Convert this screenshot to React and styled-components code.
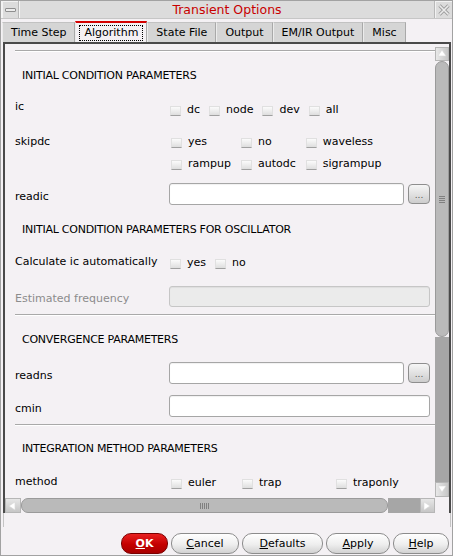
import styled, { createGlobalStyle } from "styled-components";

const GlobalStyle = createGlobalStyle`
  html, body { margin: 0; padding: 0; background: #f4f1f4; }
  * { box-sizing: border-box; }
`;

const Window = styled.div`
  width: 453px;
  height: 556px;
  border: 1px solid #a2a2a2;
  background: #f4f1f4;
  display: flex;
  flex-direction: column;
  font-family: "DejaVu Sans", "Noto Sans", sans-serif;
  font-size: 11px;
  color: #000;
  overflow: hidden;
`;

const TitleBar = styled.div`
  height: 18px;
  display: flex;
  background: #dcdcdc;
  border-bottom: 1px solid #c6c6c6;
`;

const TitleButton = styled.div`
  width: 18px;
  display: flex;
  align-items: center;
  justify-content: center;
  border-left: ${(p) => (p.$side === "right" ? "1px solid #b8b8b8" : "1px solid #f4f4f4")};
  border-right: ${(p) => (p.$side === "left" ? "1px solid #b8b8b8" : "none")};
  box-shadow: inset 1px 1px 0 #f2f2f2;
`;

const MinBar = styled.div`
  width: 11px;
  height: 4px;
  border: 1px solid #8e8e8e;
  border-radius: 1px;
  background: #ececec;
`;

const Title = styled.div`
  flex: 1;
  text-align: center;
  line-height: 18px;
  font-size: 12.5px;
  color: #c80000;
  border-left: 1px solid #f4f4f4;
`;

const TabBar = styled.div`
  margin-top: 2px;
  height: 21px;
  padding-left: 1px;
  display: flex;
  align-items: flex-end;
`;

const Tab = styled.div`
  height: ${(p) => (p.$active ? "21px" : "20px")};
  padding: 2px 3px 0;
  background: ${(p) => (p.$active ? "#f4f1f4" : "#d5d5d5")};
  border-top: ${(p) => (p.$active ? "2px solid #d40000" : "1px solid #c2c2c2")};
  border-right: 1px solid #a9a9a9;
  border-left: 1px solid #ececec;
`;

const TabLabel = styled.span`
  display: block;
  line-height: 14px;
  padding: 0 4px;
  border: 1px dotted ${(p) => (p.$focus ? "#000" : "transparent")};
`;

const Panel = styled.div`
  margin: 0 1px 0 2px;
  border: 2px solid #4a4a4a;
  border-bottom: none;
  display: grid;
  grid-template-columns: 1fr 14px;
  grid-template-rows: 453px 16px;
  background: #f4f1f4;
`;

const PanelFoot = styled.div`
  margin: 0 1px 0 2px;
  height: 14px;
  border-left: 1px solid #c4c4c4;
  border-right: 1px solid #c4c4c4;
`;

const Viewport = styled.div`
  overflow: hidden;
  padding-top: 6px;
`;

const Separator = styled.div`
  margin: ${(p) => p.$top || 0}px 0 0 10px;
  height: 2px;
  border-top: 1px solid #a9a9a9;
  border-bottom: 1px solid #ffffff;
`;

const SectionTitle = styled.div`
  margin-top: ${(p) => p.$top}px;
  padding-left: 17px;
  line-height: 16px;
  letter-spacing: -0.25px;
`;

const FormRow = styled.div`
  margin-top: ${(p) => p.$top}px;
  padding: 0 5px 0 10px;
  display: grid;
  grid-template-columns: 154px 1fr;
  align-items: ${(p) => (p.$field ? "end" : "start")};
`;

const Label = styled.div`
  line-height: 16px;
  white-space: nowrap;
  color: ${(p) => (p.$muted ? "#8c8c8c" : "#000")};
`;

const Options = styled.div`
  padding: ${(p) => p.$pad || 0}px 0 0 ${(p) => p.$indent || 1}px;
  display: ${(p) => (p.$columns ? "grid" : "flex")};
  grid-template-columns: ${(p) => p.$columns || "none"};
  justify-content: start;
  column-gap: ${(p) => (p.$columns ? 10 : 9)}px;
  row-gap: 6px;
`;

const Check = styled.label`
  display: inline-flex;
  align-items: center;
  gap: 6px;
  line-height: 16px;
  white-space: nowrap;
`;

const Box = styled.span`
  width: 11px;
  height: 10px;
  margin-top: 2px;
  border: 1px solid #e0e0e0;
  border-bottom-color: #a0a0a0;
  background: linear-gradient(#fbfbfb, #dedede);
`;

const Field = styled.div`
  display: flex;
  gap: 4px;
  align-items: center;
`;

const Input = styled.div`
  flex: 1;
  height: ${(p) => p.$h || 22}px;
  border: 1px solid ${(p) => (p.$disabled ? "#c6c6c6" : "#a6a6a6")};
  border-radius: 3px;
  background: ${(p) => (p.$disabled ? "#ebebeb" : "#ffffff")};
  box-shadow: inset 0 1px 1px rgba(0, 0, 0, 0.06);
`;

const Browse = styled.div`
  width: 22px;
  height: 20px;
  border: 1px solid #8e8e8e;
  border-radius: 4px;
  background: linear-gradient(#f6f6f6, #cdcdcd);
  font-size: 9px;
  color: #555;
  text-align: center;
  line-height: 20px;
`;

const VScroll = styled.div`
  padding-top: 3px;
  display: flex;
  flex-direction: column;
`;

const ArrowBtn = styled.div`
  flex: none;
  width: ${(p) => p.$w || 14}px;
  height: ${(p) => p.$h || 14}px;
  display: flex;
  align-items: center;
  justify-content: center;
  border: 1px solid #b6b6b6;
  background: linear-gradient(${(p) => (p.$horiz ? "#e6e6e6, #c6c6c6" : "90deg, #e8e8e8, #c6c6c6")});
`;

const Thumb = styled.div`
  flex: none;
  width: ${(p) => p.$w}px;
  height: ${(p) => p.$h}px;
  border: 1px solid #9a9a9a;
  border-radius: 7px;
  background: #bababa;
  display: flex;
  align-items: center;
  justify-content: center;
`;

const Grip = styled.div`
  width: ${(p) => (p.$horiz ? 9 : 6)}px;
  height: ${(p) => (p.$horiz ? 6 : 7)}px;
  background: repeating-linear-gradient(
    ${(p) => (p.$horiz ? "to right" : "to bottom")},
    #808080 0 1px,
    transparent 1px 2px
  );
`;

const Track = styled.div`
  flex: 1;
  background: #a6a6a6;
`;

const HScroll = styled.div`
  display: flex;
  padding-top: 1px;
`;

const ButtonRow = styled.div`
  flex: 1;
  display: flex;
  justify-content: flex-end;
  align-items: flex-end;
  gap: 3px;
  padding: 0 3px 1px 0;
`;

const PushButton = styled.button`
  width: ${(p) => p.$width}px;
  height: 21px;
  padding: 0;
  border-radius: 10px;
  font-family: "DejaVu Sans", "Noto Sans", sans-serif;
  font-size: 11px;
  border: 1px solid ${(p) => (p.$primary ? "#7a0000" : "#8c8c8c")};
  color: ${(p) => (p.$primary ? "#fff" : "#000")};
  font-weight: ${(p) => (p.$primary ? "bold" : "normal")};
  background: ${(p) =>
    p.$primary
      ? "linear-gradient(#e82020, #c40000 55%, #a80000)"
      : "linear-gradient(#ffffff, #eeeeee 55%, #d2d2d2)"};
`;

const Tri = ({ dir }) => {
  const pts = {
    up: "1,7 5,1 9,7",
    down: "1,1 5,7 9,1",
    left: "7,1 1,5 7,9",
    right: "1,1 7,5 1,9",
  }[dir];
  return (
    <svg width="10" height="10" viewBox="0 0 10 10">
      <polygon points={pts} fill="#ffffff" stroke="#d8d8d8" strokeWidth="0.6" />
    </svg>
  );
};

const CheckItem = ({ children }) => (
  <Check>
    <Box />
    {children}
  </Check>
);

const tabs = ["Time Step", "Algorithm", "State File", "Output", "EM/IR Output", "Misc"];

const buttons = [
  { k: "O", rest: "K", w: 47, primary: true },
  { k: "C", rest: "ancel", w: 68 },
  { k: "D", rest: "efaults", w: 81 },
  { k: "A", rest: "pply", w: 64 },
  { k: "H", rest: "elp", w: 56 },
];

export default function App() {
  return (
    <>
      <GlobalStyle />
      <Window>
        <TitleBar>
          <TitleButton $side="left">
            <MinBar />
          </TitleButton>
          <Title>Transient Options</Title>
          <TitleButton $side="right">
            <svg width="12" height="12" viewBox="0 0 12 12">
              <path d="M1.5 1.5 L10.5 10.5 M10.5 1.5 L1.5 10.5" stroke="#9c9c9c" strokeWidth="3.2" />
              <path d="M1.5 1.5 L10.5 10.5 M10.5 1.5 L1.5 10.5" stroke="#ececec" strokeWidth="1.6" />
            </svg>
          </TitleButton>
        </TitleBar>

        <TabBar>
          {tabs.map((t) => (
            <Tab key={t} $active={t === "Algorithm"}>
              <TabLabel $focus={t === "Algorithm"}>{t}</TabLabel>
            </Tab>
          ))}
        </TabBar>

        <Panel>
          <Viewport>
            <Separator />
            <SectionTitle $top={16}>INITIAL CONDITION PARAMETERS</SectionTitle>

            <FormRow $top={15}>
              <Label>ic</Label>
              <Options $pad={3}>
                <CheckItem>dc</CheckItem>
                <CheckItem>node</CheckItem>
                <CheckItem>dev</CheckItem>
                <CheckItem>all</CheckItem>
              </Options>
            </FormRow>

            <FormRow $top={16}>
              <Label>skipdc</Label>
              <Options $columns="auto auto auto" $indent={2}>
                <CheckItem>yes</CheckItem>
                <CheckItem>no</CheckItem>
                <CheckItem>waveless</CheckItem>
                <CheckItem>rampup</CheckItem>
                <CheckItem>autodc</CheckItem>
                <CheckItem>sigrampup</CheckItem>
              </Options>
            </FormRow>

            <FormRow $top={11} $field>
              <Label>readic</Label>
              <Field>
                <Input />
                <Browse>...</Browse>
              </Field>
            </FormRow>

            <SectionTitle $top={17}>INITIAL CONDITION PARAMETERS FOR OSCILLATOR</SectionTitle>

            <FormRow $top={16}>
              <Label>Calculate ic automatically</Label>
              <Options $pad={1}>
                <CheckItem>yes</CheckItem>
                <CheckItem>no</CheckItem>
              </Options>
            </FormRow>

            <FormRow $top={15} $field>
              <Label $muted>Estimated frequency</Label>
              <Field>
                <Input $disabled $h={21} />
              </Field>
            </FormRow>

            <Separator $top={7} />
            <SectionTitle $top={16}>CONVERGENCE PARAMETERS</SectionTitle>

            <FormRow $top={14} $field>
              <Label>readns</Label>
              <Field>
                <Input />
                <Browse>...</Browse>
              </Field>
            </FormRow>

            <FormRow $top={11} $field>
              <Label>cmin</Label>
              <Field>
                <Input />
              </Field>
            </FormRow>

            <Separator $top={7} />
            <SectionTitle $top={15}>INTEGRATION METHOD PARAMETERS</SectionTitle>

            <FormRow $top={17}>
              <Label>method</Label>
              <Options $columns="61px 84px auto" $indent={2} $pad={1}>
                <CheckItem>euler</CheckItem>
                <CheckItem>trap</CheckItem>
                <CheckItem>traponly</CheckItem>
              </Options>
            </FormRow>
          </Viewport>

          <VScroll>
            <ArrowBtn $h={14}>
              <Tri dir="up" />
            </ArrowBtn>
            <Thumb $w={14} $h={276}>
              <Grip />
            </Thumb>
            <Track />
            <ArrowBtn $h={15}>
              <Tri dir="down" />
            </ArrowBtn>
          </VScroll>

          <HScroll>
            <ArrowBtn $w={16} $h={15} $horiz>
              <Tri dir="left" />
            </ArrowBtn>
            <Thumb $w={367} $h={15}>
              <Grip $horiz />
            </Thumb>
            <Track />
            <ArrowBtn $w={15} $h={15} $horiz>
              <Tri dir="right" />
            </ArrowBtn>
          </HScroll>
          <div />
        </Panel>
        <PanelFoot />

        <ButtonRow>
          {buttons.map((b) => (
            <PushButton key={b.k} $width={b.w} $primary={b.primary}>
              <u>{b.k}</u>
              {b.rest}
            </PushButton>
          ))}
        </ButtonRow>
      </Window>
    </>
  );
}
